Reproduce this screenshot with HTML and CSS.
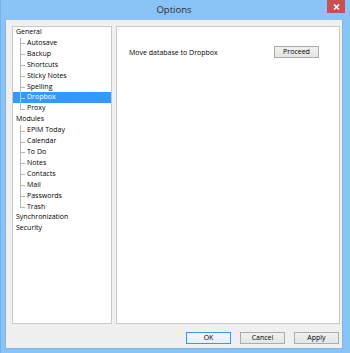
FILE: index.html
```html
<!DOCTYPE html>
<html lang="en">
<head>
    <meta charset="UTF-8">
    <title>Options</title>
    <link rel="stylesheet" href="styles.css">
</head>
<body>
    <div class="window">
        <div class="titlebar">
            <span class="title">Options</span>
            <span class="close">
                <svg width="7" height="6" viewBox="0 0 7 6"><path d="M1 0.5 L6 5.5 M6 0.5 L1 5.5" stroke="#fff" stroke-width="1.6"/></svg>
            </span>
        </div>
        <div class="client">
            <div class="panes">
                <ul class="tree">
                    <li class="node">General
                        <ul class="children">
                            <li>Autosave</li>
                            <li>Backup</li>
                            <li>Shortcuts</li>
                            <li>Sticky Notes</li>
                            <li>Spelling</li>
                            <li class="selected">Dropbox</li>
                            <li>Proxy</li>
                        </ul>
                    </li>
                    <li class="node">Modules
                        <ul class="children">
                            <li>EPIM Today</li>
                            <li>Calendar</li>
                            <li>To Do</li>
                            <li>Notes</li>
                            <li>Contacts</li>
                            <li>Mail</li>
                            <li>Passwords</li>
                            <li>Trash</li>
                        </ul>
                    </li>
                    <li class="node">Synchronization</li>
                    <li class="node">Security</li>
                </ul>
                <div class="settings">
                    <div class="setting-row">
                        <span>Move database to Dropbox</span>
                        <button class="btn">Proceed</button>
                    </div>
                </div>
            </div>
            <div class="buttons">
                <button class="btn default">OK</button>
                <button class="btn">Cancel</button>
                <button class="btn">Apply</button>
            </div>
        </div>
    </div>
</body>
</html>
```

FILE: styles.css
```css
body {
    margin: 0;
    font-family: "Open Sans", "Noto Sans", sans-serif;
    background-color: #8ac4f6;
}
.window {
    width: 350px;
    height: 353px;
    box-sizing: border-box;
    background-color: #8ac4f6;
    border-left: 1px solid #74b2ea;
    padding: 0 7px 4px 4px;
    display: flex;
    flex-direction: column;
}
.titlebar {
    height: 20px;
    display: flex;
    align-items: center;
    justify-content: center;
    position: relative;
}
.title {
    font-size: 9.5px;
    color: #2b2b2b;
    margin-top: -1px;
}
.close {
    position: absolute;
    right: -2px;
    top: 0;
    width: 18px;
    height: 13px;
    background-color: #c75050;
    display: flex;
    align-items: center;
    justify-content: center;
}
.client {
    flex: 1;
    background-color: #f0f0f0;
    border: 1px solid #7fb6e6;
    border-top: none;
    padding: 6px 2px 0 6px;
    display: flex;
    flex-direction: column;
}
.panes {
    display: flex;
    gap: 4px;
    height: 298px;
}
.tree {
    list-style: none;
    margin: 0;
    padding: 0;
    width: 100px;
    box-sizing: border-box;
    background-color: #fff;
    border: 1px solid #c9c9c9;
    font-size: 7px;
    line-height: 10.9px;
    color: #000;
}
.node {
    padding-left: 3px;
}
.children {
    list-style: none;
    margin: 0 0 0 -3px;
    padding: 0;
}
.children li {
    position: relative;
    padding-left: 14px;
}
.children li::before {
    content: "";
    position: absolute;
    left: 7px;
    top: 0;
    bottom: 0;
    border-left: 1px solid #b5b5b5;
}
.children li:last-child::before {
    bottom: 50%;
}
.children li::after {
    content: "";
    position: absolute;
    left: 7px;
    top: 50%;
    width: 5px;
    border-top: 1px solid #b5b5b5;
}
.children li.selected {
    background-color: #3399ff;
    color: #fff;
}
.children li.selected::before,
.children li.selected::after {
    border-color: #9fcdfb;
}
.settings {
    flex: 1;
    background-color: #fff;
    border: 1px solid #c9c9c9;
}
.setting-row {
    display: flex;
    justify-content: space-between;
    align-items: center;
    padding: 19px 20px 0 12px;
    font-size: 7px;
    color: #000;
}
.btn {
    width: 45px;
    height: 12px;
    padding: 0;
    box-sizing: border-box;
    font-family: inherit;
    font-size: 7px;
    line-height: 10px;
    color: #000;
    background: linear-gradient(#f0f0f0, #e5e5e5);
    border: 1px solid #acacac;
}
.btn.default {
    border-color: #3399ff;
    background: linear-gradient(#f4f8fc, #e6eef7);
}
.buttons {
    display: flex;
    justify-content: flex-end;
    gap: 9px;
    padding: 8px 1px 0 0;
}
```
